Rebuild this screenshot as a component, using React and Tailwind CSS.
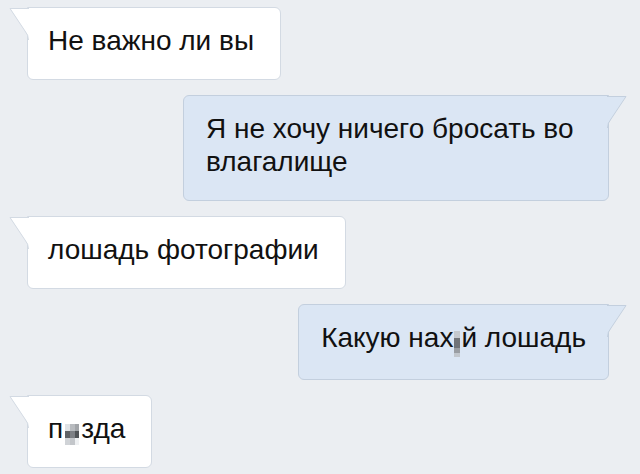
import React from "react";

function TailLeft({ fill, stroke }) {
  return (
    <svg className="absolute top-0 left-[-19px]" width="20" height="32" viewBox="0 0 20 32">
      <path d="M20 0 H1 L16 23 Q19.5 27 19.5 32 H20 Z" fill={fill} />
      <path d="M20 0.5 H1 L16 23 Q19.5 27 19.5 32" fill="none" stroke={stroke} strokeWidth="1" />
    </svg>
  );
}

function TailRight({ fill, stroke }) {
  return (
    <svg className="absolute top-0 right-[-19px]" width="20" height="32" viewBox="0 0 20 32">
      <path d="M0 0 H19 L4 23 Q0.5 27 0.5 32 H0 Z" fill={fill} />
      <path d="M0 0.5 H19 L4 23 Q0.5 27 0.5 32" fill="none" stroke={stroke} strokeWidth="1" />
    </svg>
  );
}

function Left({ children }) {
  return (
    <div className="flex justify-start pl-[27px]">
      <div className="relative bg-white border border-[#d3dae3] rounded-md rounded-tl-none pl-[20px] pr-[26px] pt-[16px] pb-[22px] text-[28px] leading-[33px] text-[#111]">
        <TailLeft fill="#ffffff" stroke="#d3dae3" />
        {children}
      </div>
    </div>
  );
}

function Right({ children, className = "" }) {
  return (
    <div className="flex justify-end pr-[31px]">
      <div className={"relative bg-[#dbe6f4] border border-[#c3cfde] rounded-md rounded-tr-none pl-[22px] pr-[22px] pt-[16px] pb-[22px] text-[28px] leading-[33px] text-[#111] " + className}>
        <TailRight fill="#dbe6f4" stroke="#c3cfde" />
        {children}
      </div>
    </div>
  );
}

function Censor1() {
  return (
    <span className="inline-block overflow-hidden align-[-10px] w-[6px] mx-[1px]">
      <span className="block h-[7px] bg-[#c4c8cd]" />
      <span className="block h-[10px] bg-[#707378]" />
      <span className="block h-[5px] bg-[#9a9ea3]" />
      <span className="block h-[4px] bg-[#c2c7cd]" />
    </span>
  );
}

function Censor2() {
  return (
    <span className="inline-block overflow-hidden w-[14px] mx-[2px] align-[-7px]">
      <span className="grid grid-cols-3">
        <span className="block h-[7px] bg-[#dfe2e5]" />
        <span className="block h-[7px] bg-[#b8bbbf]" />
        <span className="block h-[7px] bg-[#a2a5a9]" />
        <span className="block h-[7px] bg-[#5e6165]" />
        <span className="block h-[7px] bg-[#7d8085]" />
        <span className="block h-[7px] bg-[#505357]" />
        <span className="block h-[7px] bg-[#d0d3d7]" />
        <span className="block h-[7px] bg-[#c3c6ca]" />
        <span className="block h-[7px] bg-[#eef0f2]" />
      </span>
    </span>
  );
}

export default function App() {
  return (
    <div className="w-[640px] h-[474px] overflow-hidden bg-[#ebeef2] pt-[7px] flex flex-col gap-[15px] font-['Liberation_Sans',_Arial,_sans-serif]">
      <Left>Не важно ли вы</Left>
      <Right className="w-[426px]">Я не хочу ничего бросать во влагалище</Right>
      <Left>лошадь фотографии</Left>
      <Right>
        Какую нах<Censor1 />й лошадь
      </Right>
      <Left>
        п<Censor2 />зда
      </Left>
    </div>
  );
}
